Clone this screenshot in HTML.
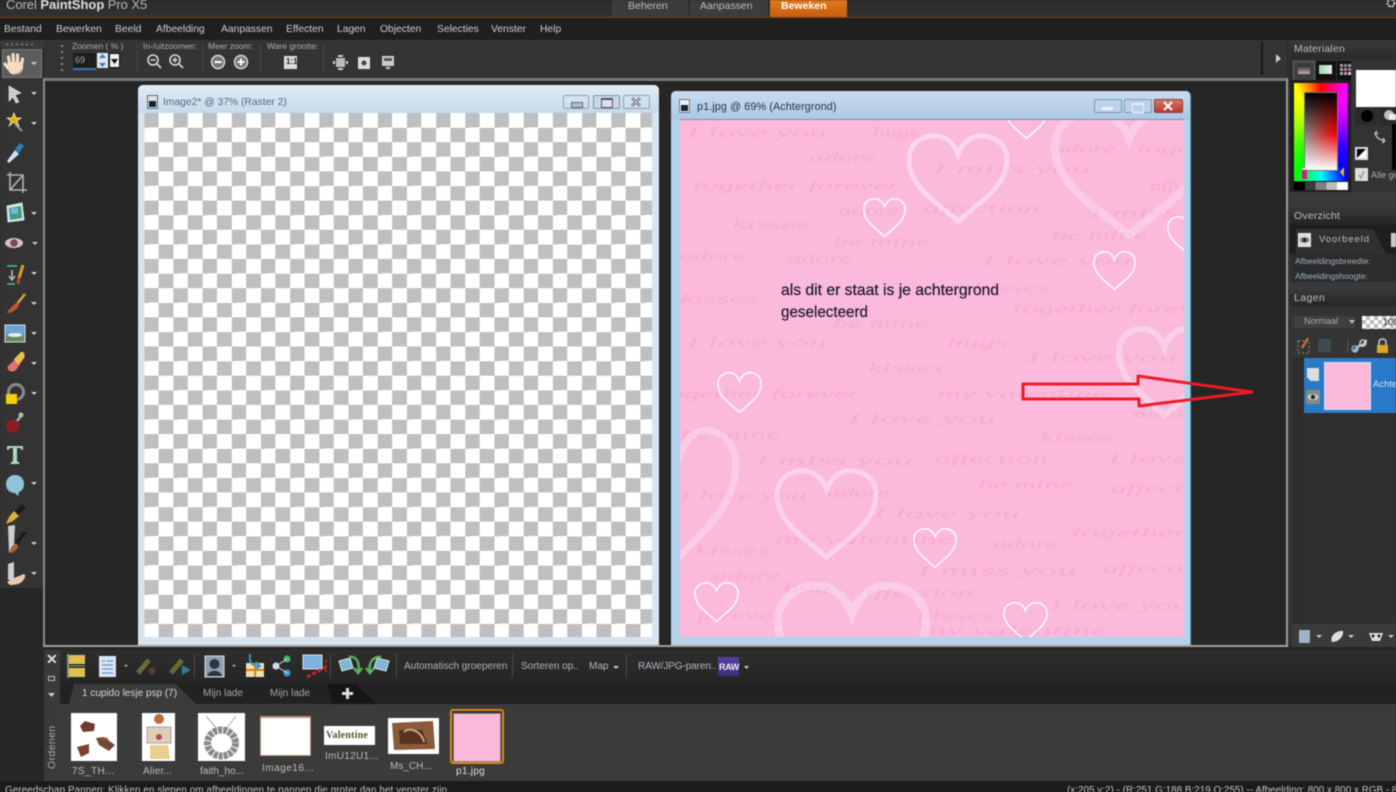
<!DOCTYPE html>
<html lang="nl"><head><meta charset="utf-8"><title>Corel PaintShop Pro X5</title>
<style>
html,body{margin:0;padding:0;width:1396px;height:792px;overflow:hidden;background:#262626}
#w{position:absolute;left:0;top:0;width:1396px;height:792px;overflow:hidden;filter:blur(.5px);font-family:"Liberation Sans",sans-serif;color:#c4c8cc}
#w div,#w svg.a{position:absolute}
.t{white-space:nowrap;font-size:10px;line-height:12px}
.l{font-size:8.5px;color:#a9adb2;line-height:10px;white-space:nowrap}
.h{font-size:10.5px;color:#b6bcc6;letter-spacing:.2px;line-height:12px;white-space:nowrap}
.c{font-size:10px;color:#bcbcbc;white-space:nowrap;line-height:12px}
.s{background:#4a4a4a;width:1px}
.m{top:24px;font-size:10.3px;color:#c8ccd2}
</style></head><body><div id="w">

<!-- top bar -->
<div style="left:0;top:0;width:1396px;height:18px;background:linear-gradient(#2a2a2a,#333)"></div>
<div style="left:0;top:17px;width:1396px;height:1px;background:#7c3c12"></div>
<div class="t" style="left:6px;top:-3px;font-size:13px;line-height:16px;color:#b8b8b8;letter-spacing:-.05px">Corel <b style="color:#ddd">PaintShop</b> Pro X5</div>
<div style="left:612px;top:0;width:76px;height:17px;background:#3c3c3c"></div>
<div style="left:690px;top:0;width:78px;height:17px;background:#3c3c3c"></div>
<div style="left:770px;top:0;width:77px;height:17px;background:linear-gradient(#e2771c,#c85f0e)"></div>
<div class="t" style="left:628px;top:0;font-size:10.5px;color:#bdbdbd">Beheren</div>
<div class="t" style="left:700px;top:0;font-size:10.5px;color:#bdbdbd">Aanpassen</div>
<div class="t" style="left:781px;top:0;font-size:10.5px;color:#fff;font-weight:bold">Beweken</div>
<svg class="a" style="left:1386px;top:0" width="10" height="12"><circle cx="5" cy="3" r="3.500" fill="none" stroke="#ccc" stroke-width="2" stroke-dasharray="2 1"/></svg>

<!-- menu -->
<div style="left:0;top:18px;width:1396px;height:22px;background:#1f1f1f"></div>
<div class="t m" style="left:4px">Bestand</div>
<div class="t m" style="left:56px">Bewerken</div>
<div class="t m" style="left:115px">Beeld</div>
<div class="t m" style="left:156px">Afbeelding</div>
<div class="t m" style="left:221px">Aanpassen</div>
<div class="t m" style="left:286px">Effecten</div>
<div class="t m" style="left:337px">Lagen</div>
<div class="t m" style="left:380px">Objecten</div>
<div class="t m" style="left:437px">Selecties</div>
<div class="t m" style="left:491px">Venster</div>
<div class="t m" style="left:540px">Help</div>

<!-- toolbar -->
<div style="left:44px;top:40px;width:1243px;height:38px;background:#343434"></div>
<div style="left:0;top:40px;width:44px;height:8px;background:#3a3a3a"></div>
<svg class="a" style="left:6px;top:43px" width="30" height="3"><path d="M0 1.500H30" stroke="#777" stroke-width="2" stroke-dasharray="2 3"/></svg>
<div class="s" style="left:137px;top:44px;height:28px"></div>
<div class="s" style="left:202px;top:44px;height:28px"></div>
<div class="s" style="left:260px;top:44px;height:28px"></div>
<div class="s" style="left:323px;top:44px;height:28px"></div>
<div style="left:1261px;top:42px;width:2px;height:33px;background:#151515"></div>
<svg class="a" style="left:1276px;top:54px" width="6" height="9"><path d="M0 0L5 4.500L0 9Z" fill="#ccc"/></svg>
<svg class="a" style="left:61px;top:45px" width="4" height="28"><g fill="#888"><rect width="2" height="2" y="0"/><rect width="2" height="2" y="6"/><rect width="2" height="2" y="12"/><rect width="2" height="2" y="18"/><rect width="2" height="2" y="24"/></g></svg>
<div class="l" style="left:72px;top:41px">Zoomen ( % )</div>
<div style="left:73px;top:53px;width:23px;height:16px;background:#1d1d1d"></div>
<div style="left:73px;top:68px;width:23px;height:2px;background:#2a78c8"></div>
<div class="t" style="left:75px;top:54px;font-size:9px;color:#9aa">69</div>
<div style="left:97px;top:53px;width:11px;height:15px;background:#dfe6ee"></div>
<svg class="a" style="left:98px;top:54px" width="9" height="13"><path d="M4.500 0L8 4H1ZM4.500 13L8 9H1Z" fill="#3b78b8"/></svg>
<div style="left:109px;top:53px;width:11px;height:15px;background:#eee;border:1px solid #111;box-sizing:border-box"></div>
<svg class="a" style="left:111px;top:59px" width="7" height="5"><path d="M0 0H7L3.500 5Z" fill="#111"/></svg>
<div class="l" style="left:143px;top:41px">In-/uitzoomen:</div>
<div class="l" style="left:208px;top:41px">Meer zoom:</div>
<div class="l" style="left:267px;top:41px">Ware grootte:</div>
<!-- zoom icons -->
<svg class="a" style="left:146px;top:53px" width="40" height="18" fill="none" stroke="#d8d8d8" stroke-width="1.600"><circle cx="7" cy="7" r="5"/><path d="M4.500 7H9.500M11 11L15 15"/><circle cx="29" cy="7" r="5"/><path d="M26.500 7H31.500M29 4.500V9.500M33 11L37 15"/></svg>
<svg class="a" style="left:210px;top:54px" width="40" height="16"><circle cx="8" cy="8" r="6.500" fill="#777" stroke="#ddd" stroke-width="1.400"/><rect x="4.500" y="7" width="7" height="2" fill="#fff"/><circle cx="31" cy="8" r="6.500" fill="#777" stroke="#ddd" stroke-width="1.400"/><path d="M27.500 8H34.500M31 4.500V11.500" stroke="#fff" stroke-width="2"/></svg>
<div style="left:284px;top:56px;width:13px;height:13px;background:#ddd"></div>
<div class="t" style="left:286px;top:57px;font-size:8px;line-height:10px;color:#222;font-weight:bold">1:1</div>
<svg class="a" style="left:333px;top:54px" width="64" height="18"><g fill="#ccc"><rect x="3" y="4" width="9" height="9" fill="#bbb"/><rect x="0" y="7" width="2" height="3"/><rect x="13" y="7" width="2" height="3"/><rect x="5" y="1" width="5" height="2"/><rect x="5" y="14" width="5" height="2"/><rect x="25" y="3" width="12" height="12" fill="#ddd"/><rect x="49" y="2" width="12" height="10" fill="#ccc"/><rect x="53" y="13" width="4" height="2"/></g><circle cx="31" cy="9" r="2.500" fill="#444"/><rect x="51" y="4" width="8" height="3" fill="#555"/></svg>

<!-- left tools -->
<div style="left:0;top:48px;width:43px;height:540px;background:#333"></div>
<div style="left:2px;top:49px;width:40px;height:29px;background:#5c5c5c;border:1px solid #777;box-sizing:border-box"></div>
<svg class="a" style="left:0;top:48px" width="43" height="540">
<defs><path id="dd" d="M0 0H6L3 3Z" fill="#ccc"/></defs>
<!-- hand -->
<g stroke="#f4dcc4" stroke-width="3.200" stroke-linecap="round" fill="none"><path d="M9.500 15L8.500 9M13.500 14L13 6.500M17.500 14L17.500 7M21.500 17L22.500 11M8 20L5 16"/></g>
<path d="M7.500 14H23V21C22 25 19 26.500 15 26.500C11 26.500 8.500 24.500 7.500 20Z" fill="#f4dcc4"/><path d="M11 26C15 27 20 26 22.500 21" fill="none" stroke="#b98d70" stroke-width="1"/>
<use href="#dd" x="31" y="14"/>
<!-- arrow -->
<path d="M9 38L21 45L15 47L19 54L16 55L13 49L9 53Z" fill="#c9c9c9" stroke="#eee" stroke-width=".6"/><use href="#dd" x="31" y="44"/>
<!-- wand -->
<g transform="translate(0 7)"><path d="M14 67L9 71L11 66L7 63H12L14 58L16 63H21L17 66L19 71Z" fill="#e6a818" stroke="#fff3b0" stroke-width=".7"/><path d="M15 69L22 76" stroke="#999" stroke-width="2"/></g><use href="#dd" x="31" y="74"/>
<!-- dropper -->
<g transform="translate(0 -5)"><path d="M7 118L15 107L19 111L9 120Z" fill="#cfe2f5"/><path d="M15 106L20 100L24 103L19 110Z" fill="#2a7fc2"/></g>
<!-- crop -->
<g transform="translate(0 -3)"><path d="M10 127V145H27M7 130H23V148M23 130L10 145" fill="none" stroke="#b0b4b0" stroke-width="1.600"/></g>
<!-- photo -->
<path d="M7 158L22 155L24 172L8 174Z" fill="#d6e6ee" stroke="#cde" stroke-width="1"/><path d="M9 160L21 158L22 170L10 172Z" fill="#3f9e77"/><rect x="11" y="160" width="7" height="6" fill="#7fb2de"/><use href="#dd" x="31" y="164"/>
<!-- eye -->
<ellipse cx="14" cy="195" rx="9" ry="5" fill="#cfc4c4"/><circle cx="14" cy="195" r="3.800" fill="#7a4652"/><use href="#dd" x="32" y="194"/>
<!-- retouch -->
<path d="M7 218H17M7 236H15" stroke="#3fb27f" stroke-width="1.800"/><path d="M12 222V230M9 228L12 232L15 228" fill="none" stroke="#ccc" stroke-width="1.400"/><path d="M23 217L19 230" stroke="#d99a2b" stroke-width="3"/><path d="M19 230L18 236" stroke="#a84f21" stroke-width="3"/><use href="#dd" x="31" y="224"/>
<!-- brush -->
<path d="M25 246L17 256" stroke="#d9a441" stroke-width="2.500"/><path d="M18 254C14 256 10 260 7 265C12 265 18 261 19 257Z" fill="#b85c2b"/><use href="#dd" x="31" y="254"/>
<!-- landscape -->
<rect x="5" y="277" width="20" height="17" fill="#5a90c5" stroke="#ddd" stroke-width="1"/><rect x="6" y="278" width="18" height="8" fill="#6aa6d8"/><ellipse cx="15" cy="287" rx="7" ry="2" fill="#e9efd9"/><rect x="6" y="289" width="18" height="4.500" fill="#6b8a4a"/><use href="#dd" x="31" y="284"/>
<!-- eraser -->
<path d="M21 306L25 309L16 322C12 326 6 322 8 318Z" fill="#e36f6f"/><path d="M14 311L21 304C23 303 26 306 24 309L18 317Z" fill="#e8c24a"/><use href="#dd" x="31" y="314"/>
<!-- bucket -->
<circle cx="16" cy="344" r="7.500" fill="none" stroke="#8c8c8c" stroke-width="3"/><rect x="6" y="346" width="11" height="10" fill="#f1d100"/><use href="#dd" x="31" y="344"/>
<!-- stamp -->
<circle cx="13" cy="378" r="6.500" fill="#8c1d26"/><path d="M17 373L21 368" stroke="#aaa" stroke-width="2.500"/><circle cx="21" cy="367" r="2.500" fill="#bbb"/>
<!-- T -->
<g transform="translate(0 -1)"><path d="M7 399H23V403H22L20 401H17V414L19.500 416V417H10.500V416L13 414V401H10L8 403H7Z" fill="#a9d8bb"/></g>
<!-- bubble -->
<path d="M15 427C21 427 24 431 24 436C24 440 22 443 19 444L18 448L15 445C9 445 6 441 6 436C6 431 10 427 15 427Z" fill="#8fc3d6"/><use href="#dd" x="31" y="434"/>
<!-- pen -->
<path d="M24 458L16 466" stroke="#1a1a1a" stroke-width="5"/><path d="M14 463L19 468L13 473L6 476L9 469Z" fill="#d9b13a"/>
<!-- smudge -->
<path d="M8 478L15 477L14 497L9 505Z" fill="#cfcfcf"/><path d="M25 484L16 496" stroke="#1a1a1a" stroke-width="3.500"/><path d="M16 495C12 497 10 501 9 505C14 505 18 501 18 498Z" fill="#a9623a"/><use href="#dd" x="31" y="494"/>
<!-- last -->
<path d="M8 516L14 514L14 532L8 532Z" fill="#cfcfcf"/><path d="M7 534L14 530L24 526C26 527 25 530 24 531C22 535 18 537 10 537Z" fill="#eec9a9"/><use href="#dd" x="31" y="524"/>
</svg>
<div style="left:43px;top:78px;width:2px;height:568px;background:#8a8a8a"></div>

<!-- workspace -->
<div style="left:45px;top:78px;width:1242px;height:3px;background:#777"></div>
<div style="left:45px;top:81px;width:1241px;height:565px;background:#262626"></div>
<div style="left:1286px;top:78px;width:2px;height:568px;background:#9a9a9a"></div>
<div style="left:43px;top:645px;width:1245px;height:2px;background:#a0a0a0"></div>

<!-- window 1 -->
<div style="left:138px;top:85px;width:521px;height:560px;background:#d8e4f0;border-radius:5px 5px 0 0;overflow:hidden">
  <div style="left:0;top:0;width:521px;height:28px;background:linear-gradient(#e2ecf6,#c6d9eb)"></div>
  <div style="left:6px;top:28px;width:508px;height:524px;background-color:#fff;background-image:conic-gradient(#bfbfbf 25%,#fff 0 50%,#bfbfbf 0 75%,#fff 0);background-size:29.2px 29.2px;background-position:14.6px 0"></div>
  <div class="t" style="left:25px;top:11px;font-size:10.3px;line-height:13px;color:#4d6a88">Image2* @ 37% (Raster 2)</div>
  <div style="left:425px;top:10px;width:26px;height:14px;border:1px solid #8da2b8;border-radius:2px;box-sizing:border-box"></div>
  <div style="left:455px;top:10px;width:27px;height:14px;border:1px solid #7c93ab;border-radius:2px;box-sizing:border-box;background:#c9d8e8"></div>
  <div style="left:485px;top:10px;width:27px;height:14px;border:1px solid #8da2b8;border-radius:2px;box-sizing:border-box"></div>
  <div style="left:433px;top:17px;width:10px;height:4px;background:#b5bec8;border:1px solid #667"></div>
  <div style="left:463px;top:13px;width:10px;height:7px;border:1px solid #556;border-top-width:2px;background:#dde"></div>
  <svg class="a" style="left:492px;top:12px" width="12" height="10"><path d="M2 1L10 9M10 1L2 9" stroke="#445" stroke-width="2.500"/><path d="M2 1L10 9M10 1L2 9" stroke="#dde" stroke-width="1"/></svg>
  <div style="left:9px;top:10px;width:11px;height:14px;background:#dfe4e6;border:1px solid #667;box-sizing:border-box"></div>
  <div style="left:11px;top:16px;width:7px;height:6px;background:#123"></div>
</div>

<!-- window 2 -->
<div style="left:671px;top:91px;width:520px;height:554px;background:#b5d2ea;border-radius:5px 5px 0 0;overflow:hidden;border-right:1px solid #5fa9cc;box-sizing:border-box">
  <div style="left:0;top:0;width:520px;height:29px;background:linear-gradient(#c9dcee,#a9c9e6)"></div>
  <div style="left:9px;top:28px;width:504px;height:518px;background:#fbb9dc;border-top:1px solid #88a;box-sizing:border-box"></div>
  <div class="t" style="left:26px;top:10px;font-size:10.8px;line-height:13px;color:#223448;letter-spacing:.1px">p1.jpg @ 69% (Achtergrond)</div>
  <div style="left:423px;top:8px;width:28px;height:14px;border:1px solid #7d97b2;border-radius:2px;box-sizing:border-box;background:#bcd2e6"></div>
  <div style="left:453px;top:8px;width:28px;height:14px;border:1px solid #7d97b2;border-radius:2px;box-sizing:border-box;background:#bcd2e6"></div>
  <div style="left:483px;top:8px;width:29px;height:14px;border:1px solid #8a3a36;border-radius:2px;box-sizing:border-box;background:linear-gradient(#d9776c,#b93a30)"></div>
  <div style="left:431px;top:16px;width:11px;height:3px;background:#eef"></div>
  <div style="left:461px;top:12px;width:10px;height:7px;border:1px solid #eef;border-top-width:2px"></div>
  <svg class="a" style="left:491px;top:10px" width="12" height="10"><path d="M2 1L10 9M10 1L2 9" stroke="#fff" stroke-width="2"/></svg>
  <div style="left:8px;top:8px;width:11px;height:14px;background:#eef0f2;border:1px solid #778;box-sizing:border-box"></div>
  <div style="left:10px;top:14px;width:7px;height:6px;background:#123"></div>
</div>

<!-- canvas art -->
<svg class="a" style="left:0;top:0" width="1396" height="792">
<defs>
<clipPath id="cp"><rect x="680" y="120" width="504" height="517"/></clipPath>
<path id="h" d="M50 96C30 76 2 58 2 28C2 10 15 2 27 2C38 2 46 10 50 22C54 10 62 2 73 2C85 2 98 10 98 28C98 58 70 76 50 96Z" vector-effect="non-scaling-stroke"/>
</defs>
<g clip-path="url(#cp)">
<g font-family="Liberation Serif,serif" font-style="italic" font-size="14" fill="#f7acd1">
<text x="687" y="137" textLength="140" lengthAdjust="spacingAndGlyphs">I love you</text>
<text x="873" y="137" textLength="45" lengthAdjust="spacingAndGlyphs">hugs</text>
<text x="810" y="162" textLength="65" lengthAdjust="spacingAndGlyphs">adore</text>
<text x="693" y="190" textLength="207" lengthAdjust="spacingAndGlyphs">together forever</text>
<text x="838" y="215" textLength="62" lengthAdjust="spacingAndGlyphs">adore</text>
<text x="923" y="213" textLength="117" lengthAdjust="spacingAndGlyphs">affection</text>
<text x="732" y="229" textLength="77" lengthAdjust="spacingAndGlyphs">kisses</text>
<text x="833" y="246" textLength="97" lengthAdjust="spacingAndGlyphs">be mine</text>
<text x="933" y="173" textLength="158" lengthAdjust="spacingAndGlyphs">I miss you</text>
<text x="1052" y="153" textLength="63" lengthAdjust="spacingAndGlyphs">adore</text>
<text x="1137" y="153" textLength="105" lengthAdjust="spacingAndGlyphs">together</text>
<text x="680" y="260" textLength="65" lengthAdjust="spacingAndGlyphs">adore</text>
<text x="787" y="263" textLength="65" lengthAdjust="spacingAndGlyphs">adore</text>
<text x="982" y="265" textLength="150" lengthAdjust="spacingAndGlyphs">I love you</text>
<text x="1052" y="240" textLength="95" lengthAdjust="spacingAndGlyphs">be mine</text>
<text x="1090" y="217" textLength="150" lengthAdjust="spacingAndGlyphs">I miss you</text>
<text x="1150" y="190" textLength="80" lengthAdjust="spacingAndGlyphs">affection</text>
<text x="680" y="303" textLength="77" lengthAdjust="spacingAndGlyphs">kisses</text>
<text x="973" y="292" textLength="77" lengthAdjust="spacingAndGlyphs">kisses</text>
<text x="1013" y="313" textLength="207" lengthAdjust="spacingAndGlyphs">together forever</text>
<text x="833" y="328" textLength="95" lengthAdjust="spacingAndGlyphs">be mine</text>
<text x="687" y="347" textLength="140" lengthAdjust="spacingAndGlyphs">I love you</text>
<text x="947" y="347" textLength="60" lengthAdjust="spacingAndGlyphs">hugs</text>
<text x="1027" y="362" textLength="150" lengthAdjust="spacingAndGlyphs">I love you</text>
<text x="868" y="372" textLength="75" lengthAdjust="spacingAndGlyphs">kisses</text>
<text x="660" y="398" textLength="200" lengthAdjust="spacingAndGlyphs">together forever</text>
<text x="937" y="398" textLength="170" lengthAdjust="spacingAndGlyphs">my valentine</text>
<text x="848" y="423" textLength="148" lengthAdjust="spacingAndGlyphs">I love you</text>
<text x="1040" y="442" textLength="73" lengthAdjust="spacingAndGlyphs">kisses</text>
<text x="1133" y="418" textLength="65" lengthAdjust="spacingAndGlyphs">adore</text>
<text x="680" y="439" textLength="100" lengthAdjust="spacingAndGlyphs">be mine</text>
<text x="755" y="465" textLength="158" lengthAdjust="spacingAndGlyphs">I miss you</text>
<text x="935" y="463" textLength="113" lengthAdjust="spacingAndGlyphs">affection</text>
<text x="1108" y="463" textLength="140" lengthAdjust="spacingAndGlyphs">I love you</text>
<text x="978" y="489" textLength="95" lengthAdjust="spacingAndGlyphs">be mine</text>
<text x="1110" y="493" textLength="115" lengthAdjust="spacingAndGlyphs">affection</text>
<text x="680" y="500" textLength="127" lengthAdjust="spacingAndGlyphs">I love you</text>
<text x="827" y="497" textLength="63" lengthAdjust="spacingAndGlyphs">adore</text>
<text x="873" y="518" textLength="147" lengthAdjust="spacingAndGlyphs">I love you</text>
<text x="1072" y="537" textLength="115" lengthAdjust="spacingAndGlyphs">together</text>
<text x="775" y="544" textLength="178" lengthAdjust="spacingAndGlyphs">my valentine</text>
<text x="993" y="548" textLength="65" lengthAdjust="spacingAndGlyphs">adore</text>
<text x="695" y="555" textLength="75" lengthAdjust="spacingAndGlyphs">kisses</text>
<text x="713" y="580" textLength="67" lengthAdjust="spacingAndGlyphs">adore</text>
<text x="917" y="575" textLength="160" lengthAdjust="spacingAndGlyphs">I miss you</text>
<text x="1102" y="573" textLength="115" lengthAdjust="spacingAndGlyphs">affection</text>
<text x="783" y="592" textLength="60" lengthAdjust="spacingAndGlyphs">hugs</text>
<text x="857" y="597" textLength="117" lengthAdjust="spacingAndGlyphs">affection</text>
<text x="1050" y="610" textLength="140" lengthAdjust="spacingAndGlyphs">I love you</text>
<text x="697" y="620" textLength="87" lengthAdjust="spacingAndGlyphs">forever</text>
<text x="917" y="620" textLength="77" lengthAdjust="spacingAndGlyphs">kisses</text>
<text x="920" y="635" textLength="187" lengthAdjust="spacingAndGlyphs">my valentine</text>
</g>
<g fill="none" stroke="#fff">
<use href="#h" transform="translate(907 134) scale(1.02 .91)" stroke-width="5" opacity=".42"/>
<use href="#h" transform="translate(1052 110) scale(1.54 1.3)" stroke-width="8" opacity=".28"/>
<use href="#h" transform="translate(1117 327) scale(.95 .92)" stroke-width="6" opacity=".32"/>
<use href="#h" transform="translate(620 428) scale(1.18 1.35)" stroke-width="7" opacity=".28"/>
<use href="#h" transform="translate(775 469) scale(1.03 .92)" stroke-width="5" opacity=".38"/>
<use href="#h" transform="translate(775 583) scale(1.54 1.4)" stroke-width="8" opacity=".3"/>
<g stroke-width="1.700" opacity=".85">
<use href="#h" transform="translate(863 198) scale(.43 .4)"/>
<use href="#h" transform="translate(1005 100) scale(.43 .4)"/>
<use href="#h" transform="translate(1167 216) scale(.43 .4)"/>
<use href="#h" transform="translate(1093 251) scale(.43 .4)"/>
<use href="#h" transform="translate(717 372) scale(.45 .42)"/>
<use href="#h" transform="translate(913 528) scale(.44 .41)"/>
<use href="#h" transform="translate(694 582) scale(.45 .41)"/>
<use href="#h" transform="translate(1003 602) scale(.45 .4)"/>
</g>
</g>
</g>
<g font-family="Liberation Sans,sans-serif" font-size="16" fill="#1a1a2e" stroke="#1a1a2e" stroke-width=".2">
<text x="781" y="295" textLength="218" lengthAdjust="spacingAndGlyphs">als dit er staat is je achtergrond</text>
<text x="781" y="317" textLength="87" lengthAdjust="spacingAndGlyphs">geselecteerd</text>
</g>
<path d="M1023 384H1138V376L1252 392L1139 406V399H1023Z" fill="none" stroke="#ed1c24" stroke-width="3" stroke-linejoin="round"/>
</svg>

<!-- right panel -->
<div style="left:1288px;top:40px;width:108px;height:608px;background:#333"></div>
<div style="left:1290px;top:40px;width:106px;height:19px;background:linear-gradient(#3a3a3a,#2a2a2a)"></div>
<div class="h" style="left:1294px;top:43px">Materialen</div>
<div style="left:1290px;top:59px;width:1px;height:133px;background:#222"></div>
<div style="left:1293px;top:61px;width:22px;height:19px;background:#3f3f3f;border:1px solid #666;border-bottom:0;box-sizing:border-box"></div>
<div style="left:1298px;top:65px;width:12px;height:9px;background:linear-gradient(#222,#c9b0b0)"></div>
<div style="left:1316px;top:61px;width:20px;height:19px;background:#111"></div>
<div style="left:1319px;top:65px;width:13px;height:9px;background:linear-gradient(90deg,#9fd3b0,#eee)"></div>
<div style="left:1337px;top:61px;width:14px;height:19px;background:#111"></div>
<svg class="a" style="left:1340px;top:64px" width="11" height="11"><g fill="#b99"><rect width="3" height="3"/><rect x="4" width="3" height="3" fill="#88a"/><rect x="8" width="3" height="3" fill="#9a9"/><rect y="4" width="3" height="3" fill="#aa8"/><rect x="4" y="4" width="3" height="3" fill="#c88"/><rect x="8" y="4" width="3" height="3" fill="#88c"/><rect y="8" width="3" height="3" fill="#8bb"/><rect x="4" y="8" width="3" height="3" fill="#c9a"/><rect x="8" y="8" width="3" height="3" fill="#ccc"/></g></svg>
<div style="left:1291px;top:80px;width:60px;height:112px;background:#1e1e1e"></div>
<div style="left:1294px;top:83px;width:54px;height:98px;background:conic-gradient(from 0deg at 50% 50%,#f00 0deg,#f0f 29deg,#00f 151deg,#0ff 180deg,#0f0 209deg,#ff0 331deg,#f00 360deg)"></div>
<div style="left:1304px;top:92px;width:34px;height:79px;background:linear-gradient(#000,rgba(0,0,0,0) 55%,rgba(255,255,255,0) 55%,#fff),linear-gradient(90deg,#8a8a8a,#f00);border:1px solid #777;box-sizing:border-box"></div>
<div style="left:1294px;top:182px;width:54px;height:8px;background:linear-gradient(90deg,#000 0 20%,#3a3a3a 20% 40%,#808080 40% 60%,#bdbdbd 60% 80%,#fff 80%)"></div>
<div style="left:1302px;top:168px;width:5px;height:11px;background:#e0168c;border-top:2px solid #ddd;box-sizing:border-box"></div>
<svg class="a" style="left:1340px;top:167px" width="5" height="10"><path d="M4 0V10L0 5Z" fill="#e8c000"/></svg>
<div style="left:1356px;top:70px;width:40px;height:37px;background:#fff"></div>
<div style="left:1355px;top:108px;width:22px;height:17px;background:#2a2a2a"></div>
<div style="left:1361px;top:110px;width:12px;height:12px;background:#000;border-radius:50%"></div>
<div style="left:1379px;top:108px;width:17px;height:17px;background:#2a2a2a"></div>
<svg class="a" style="left:1383px;top:109px" width="13" height="13"><circle cx="6" cy="6" r="5" fill="#bbb"/><rect x="6" y="5" width="7" height="6" fill="#eee"/></svg>
<svg class="a" style="left:1373px;top:130px" width="14" height="14" fill="none" stroke="#ccc" stroke-width="1.200"><path d="M2 3L4 1M2 3L5 4M2 3C3 8 7 10 12 11M12 11L9 13M12 11L10 8"/></svg>
<div style="left:1392px;top:124px;width:4px;height:46px;background:#000"></div>
<div style="left:1355px;top:147px;width:13px;height:13px;background:linear-gradient(135deg,#000 49%,#fff 51%);border:2px solid #ddd;box-sizing:border-box"></div>
<div style="left:1355px;top:168px;width:13px;height:13px;background:#ddd"></div>
<svg class="a" style="left:1357px;top:170px" width="9" height="9"><path d="M2 5L4 8L7 1" fill="none" stroke="#999" stroke-width="1.500"/></svg>
<div class="t" style="left:1371px;top:169px;font-size:9px;color:#aab">Alle ge</div>

<div style="left:1288px;top:192px;width:108px;height:15px;background:#3a3a3a"></div>
<div style="left:1290px;top:206px;width:106px;height:19px;background:linear-gradient(#3a3a3a,#242424)"></div>
<div class="h" style="left:1294px;top:210px">Overzicht</div>
<div style="left:1290px;top:225px;width:106px;height:29px;background:#1e1e1e"></div>
<div style="left:1296px;top:229px;width:90px;height:25px;background:#303030;clip-path:polygon(0 0,86% 0,100% 100%,0 100%)"></div>
<div style="left:1298px;top:233px;width:13px;height:14px;background:#e2e2e2"></div>
<svg class="a" style="left:1299px;top:236px" width="11" height="8"><ellipse cx="5.500" cy="4" rx="5" ry="3" fill="#888"/><circle cx="5.500" cy="4" r="2" fill="#222"/></svg>
<div class="h" style="left:1319px;top:234px;font-size:9.5px;letter-spacing:.9px">Voorbeeld</div>
<div style="left:1391px;top:233px;width:5px;height:14px;background:#ccc"></div>
<div style="left:1292px;top:254px;width:104px;height:28px;background:#2c2c2c"></div>
<div class="l" style="left:1295px;top:256px;color:#9db0c4">Afbeeldingsbreedte:</div>
<div class="l" style="left:1295px;top:271px;color:#9db0c4">Afbeeldingshoogte:</div>

<div style="left:1288px;top:282px;width:108px;height:6px;background:#3a3a3a"></div>
<div style="left:1290px;top:288px;width:106px;height:18px;background:linear-gradient(#3a3a3a,#262626)"></div>
<div class="h" style="left:1294px;top:292px;letter-spacing:.4px">Lagen</div>
<div style="left:1293px;top:316px;width:62px;height:12px;background:#3f3f3f"></div>
<div class="t" style="left:1304px;top:315px;font-size:9px;color:#aaa">Normaal</div>
<svg class="a" style="left:1349px;top:320px" width="6" height="4"><path d="M0 0H6L3 4Z" fill="#bbb"/></svg>
<div style="left:1362px;top:316px;width:34px;height:13px;background-color:#fff;background-image:conic-gradient(#bbb 25%,#fff 0 50%,#bbb 0 75%,#fff 0);background-size:8px 8px"></div>
<div class="t" style="left:1383px;top:316px;font-size:9px;color:#223">100</div>
<div style="left:1292px;top:334px;width:104px;height:24px;background:#343434"></div>
<svg class="a" style="left:1296px;top:337px" width="100" height="18">
<path d="M12 1L6 11" stroke="#c76a2a" stroke-width="2.500"/><rect x="2" y="4" width="11" height="12" fill="none" stroke="#888" stroke-dasharray="2 2"/>
<rect x="22" y="2" width="13" height="13" fill="#3f4c52"/>
<path d="M52 2V16" stroke="#555"/>
<path d="M58 14L64 8M66 9L70 4" stroke="#bbb" stroke-width="2.500" stroke-linecap="round"/><circle cx="59" cy="12" r="3" fill="none" stroke="#9bd" stroke-width="1.300"/><circle cx="67" cy="6" r="3" fill="none" stroke="#ddd" stroke-width="1.300"/>
<rect x="81" y="8" width="11" height="8" fill="#dca428"/><path d="M83 8V5C83 1 90 1 90 5V8" fill="none" stroke="#ccc" stroke-width="1.500"/>
</svg>
<div style="left:1292px;top:358px;width:12px;height:266px;background:#2d2d2d"></div>
<div style="left:1304px;top:358px;width:92px;height:55px;background:#2a78c8"></div>
<div style="left:1324px;top:362px;width:47px;height:48px;background:#fbb9dc;border:1px solid #cfe0f0;box-sizing:border-box"></div>
<div style="left:1307px;top:368px;width:12px;height:13px;background:#ddd;clip-path:polygon(0 0,100% 0,100% 100%,30% 100%,0 70%)"></div>
<div style="left:1306px;top:390px;width:14px;height:14px;background:#888"></div>
<svg class="a" style="left:1307px;top:393px" width="12" height="8"><ellipse cx="6" cy="4" rx="5.500" ry="3" fill="#ccc"/><circle cx="6" cy="4" r="2.200" fill="#222"/></svg>
<div class="t" style="left:1373px;top:379px;font-size:9.5px;color:#cfe4f7">Achtergrond</div>
<div style="left:1304px;top:413px;width:92px;height:211px;background:#2f2f2f"></div>
<div style="left:1292px;top:624px;width:104px;height:24px;background:#3a3a3a"></div>
<svg class="a" style="left:1296px;top:628px" width="100" height="16"><path d="M3 2H14V15H3Z" fill="#9fb3c7"/><path d="M20 7H26L23 10Z" fill="#ccc"/><path d="M36 14C33 8 41 2 47 3C48 8 43 14 36 14Z" fill="#ddd"/><path d="M52 7H58L55 10Z" fill="#ccc"/><path d="M73 5H87L84 13H76Z" fill="#ddd"/><circle cx="77" cy="8" r="1.500" fill="#222"/><circle cx="83" cy="8" r="1.500" fill="#222"/><path d="M92 7H98L95 10Z" fill="#ccc"/></svg>

<!-- organizer -->
<div style="left:0;top:647px;width:1396px;height:134px;background:#262626"></div>
<div style="left:44px;top:650px;width:16px;height:131px;background:#3a3a3a"></div>
<div class="t" style="left:46px;top:652px;font-size:14px;line-height:14px;color:#ddd;font-weight:bold">✕</div>
<div style="left:48px;top:676px;width:7px;height:5px;border:1px solid #bbb;box-sizing:border-box"></div>
<svg class="a" style="left:48px;top:693px" width="7" height="4"><path d="M0 0H7L3.500 4Z" fill="#ccc"/></svg>
<div class="l" style="left:31px;top:742px;transform:rotate(-90deg);font-size:10.5px;width:42px;height:12px;line-height:12px;letter-spacing:.4px;text-align:center;color:#aaa">Ordenen</div>
<div style="left:60px;top:650px;width:1336px;height:33px;background:linear-gradient(#2e2e2e,#252525)"></div>
<div style="left:60px;top:683px;width:1336px;height:21px;background:#222"></div>
<div style="left:60px;top:704px;width:1336px;height:77px;background:#3b3b3b"></div>
<div class="s" style="left:194px;top:654px;height:24px"></div>
<div class="s" style="left:330px;top:654px;height:24px"></div>
<div class="s" style="left:396px;top:654px;height:24px"></div>
<div class="s" style="left:512px;top:654px;height:24px"></div>
<div class="s" style="left:626px;top:654px;height:24px"></div>
<svg class="a" style="left:64px;top:652px" width="290" height="28">
<path d="M5 3H21V12H5ZM5 16H21V25H5Z" fill="#e0c04e"/><path d="M5 14H21" stroke="#7a6"/><path d="M4 2V26" stroke="#aaa" stroke-width="1.500"/>
<rect x="35" y="4" width="17" height="21" fill="#d9e6f2"/><path d="M38 9H41M43 9H49M38 13H49M38 17H49M38 21H49" stroke="#4a86c0"/><path d="M60 13H64L62 15Z" fill="#bbb"/>
<path d="M74 21L85 8" stroke="#6b6a33" stroke-width="5"/><circle cx="88" cy="19" r="3.500" fill="#5d3a36"/>
<path d="M107 21L118 8" stroke="#6b6a33" stroke-width="5"/><path d="M118 13L127 18L118 23Z" fill="#2d7d96"/>
<rect x="141" y="4" width="19" height="21" fill="#8fa0b2" stroke="#ddd"/><circle cx="150.500" cy="12" r="5" fill="#2d3540"/><path d="M143 24C145 17 156 17 158 24Z" fill="#2d3540"/><path d="M168 13H172L170 15Z" fill="#bbb"/>
<rect x="182" y="11" width="18" height="14" fill="#f2e0b0"/><path d="M182 18H200M191 11V25" stroke="#d5801f" stroke-width="2"/><path d="M186 2V8C186 12 191 14 196 14M192 10L196 14L192 17" fill="none" stroke="#3a93c5" stroke-width="2"/>
<circle cx="212" cy="14" r="3.500" fill="#cde"/><circle cx="223" cy="7" r="3.500" fill="#4bb36a"/><circle cx="223" cy="21" r="3.500" fill="#3aa0c4"/><path d="M212 14L223 7M212 14L223 21" stroke="#cde"/>
<rect x="239" y="3" width="19" height="14" fill="#7fb2de" stroke="#ddd"/><path d="M243 25L262 15" stroke="#c22" stroke-width="3" stroke-dasharray="4 2"/><path d="M262 8V20" stroke="#c22" stroke-width="2" stroke-dasharray="3 2"/>
</svg>
<svg class="a" style="left:337px;top:654px" width="55" height="24"><path d="M2 7L13 4L16 14L5 17Z" fill="#7fb8cc" stroke="#dde"/><path d="M12 3C20 2 23 9 21 18M17 14L21 19L25 14" fill="none" stroke="#59b05f" stroke-width="2.500"/><path d="M40 4L52 7L49 17L37 14Z" fill="#7fb8cc" stroke="#dde"/><path d="M44 3C36 2 31 9 33 18M29 14L33 19L37 14" fill="none" stroke="#59b05f" stroke-width="2.500"/></svg>
<div class="t" style="left:404px;top:661px;color:#a8b4c0;font-size:10px">Automatisch groeperen</div>
<div class="t" style="left:521px;top:661px;color:#b3b3a8;font-size:10px">Sorteren op..</div>
<div class="t" style="left:589px;top:661px;color:#aebac6;font-size:10px">Map</div>
<svg class="a" style="left:613px;top:666px" width="6" height="3"><path d="M0 0H6L3 3Z" fill="#ccc"/></svg>
<div class="t" style="left:638px;top:661px;color:#b0bac4;font-size:10px;letter-spacing:-.1px">RAW/JPG-paren..</div>
<div style="left:718px;top:657px;width:21px;height:19px;background:linear-gradient(#5a3fa0,#3d2a80)"></div>
<div class="t" style="left:719px;top:661px;color:#eee;font-size:9px;font-weight:bold;letter-spacing:-.3px">RAW</div>
<svg class="a" style="left:744px;top:666px" width="5" height="3"><path d="M0 0H5L2.500 3Z" fill="#ccc"/></svg>

<!-- tabs -->
<div style="left:69px;top:684px;width:127px;height:20px;background:#3b3b3b;clip-path:polygon(4% 0,84% 0,100% 100%,0 100%)"></div>
<div class="t" style="left:82px;top:688px;color:#d5d5d5;font-size:10px">1 cupido lesje psp (7)</div>
<div class="t" style="left:203px;top:688px;color:#9fa8b0;font-size:10px">Mijn lade</div>
<div class="t" style="left:270px;top:688px;color:#9fa8b0;font-size:10px">Mijn lade</div>
<div style="left:325px;top:684px;width:52px;height:20px;background:#161616;clip-path:polygon(4% 0,60% 0,100% 100%,14% 100%)"></div>
<div style="left:342px;top:692px;width:11px;height:3px;background:#ddd"></div>
<div style="left:346px;top:688px;width:3px;height:11px;background:#ddd"></div>

<!-- thumbs -->
<div style="left:71px;top:713px;width:46px;height:48px;background:#fff"></div>
<svg class="a" style="left:71px;top:713px" width="46" height="48"><path d="M9 13L14 8L24 11L23 18L12 19Z" fill="#6e3b2e"/><path d="M6 34L18 31L18 40L10 44Z" fill="#7b4230"/><path d="M25 25L33 24L44 32L38 38L28 32Z" fill="#6e4a35"/><path d="M31 25L37 26" stroke="#c44" stroke-width="2"/></svg>
<div style="left:142px;top:713px;width:33px;height:48px;background:#fff"></div>
<svg class="a" style="left:142px;top:713px" width="33" height="48"><circle cx="17" cy="6" r="5" fill="#b5713a"/><rect x="5" y="14" width="24" height="16" fill="#d9d0b5" stroke="#b9a"/><path d="M8 32H26L28 46H8Z" fill="#e6d18f"/><circle cx="17" cy="24" r="3" fill="#b34a55"/></svg>
<div style="left:198px;top:713px;width:47px;height:48px;background:#fff"></div>
<svg class="a" style="left:198px;top:713px" width="47" height="48" fill="none"><path d="M8 3L19 16M38 3L28 16" stroke="#aaa"/><ellipse cx="23.500" cy="30" rx="14" ry="13" stroke="#8a8a8a" stroke-width="7" stroke-dasharray="4 1"/></svg>
<div style="left:260px;top:716px;width:51px;height:40px;background:#fff;border:1px solid #b9907a;border-top-width:2px;box-sizing:border-box"></div>
<div style="left:324px;top:726px;width:51px;height:19px;background:#fff"></div>
<div style="left:326px;top:730px;color:#4a5a2a;font-family:'Liberation Serif',serif;font-weight:bold;font-size:10px;line-height:11px;white-space:nowrap;letter-spacing:.2px">Valentine</div>
<div style="left:388px;top:718px;width:51px;height:36px;background:#fff"></div>
<svg class="a" style="left:388px;top:718px" width="51" height="36"><path d="M4 5L45 3L47 31L6 32Z" fill="#8a5a3a"/><path d="M11 12H34L40 26H12Z" fill="#5c3322"/><path d="M16 14C22 8 34 14 36 24" fill="none" stroke="#c9a78c" stroke-width="2"/></svg>
<div style="left:450px;top:709px;width:54px;height:55px;border:2px solid #d98a18;border-radius:3px;box-sizing:border-box;background:#2e2e2e"></div>
<div style="left:453px;top:713px;width:48px;height:49px;background:#fbb9dc;border:1px solid #8a7f88;box-sizing:border-box"></div>
<div class="c" style="left:72px;top:766px;letter-spacing:.4px">7S_TH...</div>
<div class="c" style="left:143px;top:766px;letter-spacing:.2px">Alier...</div>
<div class="c" style="left:200px;top:766px">faith_ho...</div>
<div class="c" style="left:262px;top:763px;letter-spacing:.5px">Image16...</div>
<div class="c" style="left:325px;top:751px;letter-spacing:.3px">ImU12U1...</div>
<div class="c" style="left:390px;top:761px">Ms_CH...</div>
<div class="c" style="left:456px;top:766px;color:#ddd;letter-spacing:.3px">p1.jpg</div>

<!-- status -->
<div style="left:0;top:781px;width:1396px;height:11px;background:#1b1b1b"></div>
<div class="t" style="left:5px;top:785px;font-size:9.8px;color:#c4c4c4;letter-spacing:.12px">Gereedschap Pannen: Klikken en slepen om afbeeldingen te pannen die groter dan het venster zijn.</div>
<div class="t" style="left:1067px;top:785px;font-size:9.8px;color:#c4c4c4;letter-spacing:.05px">(x:205 y:2) - (R:251 G:188 B:219 O:255) -- Afbeelding: 800 x 800 x RGB - 8</div>

</div></body></html>
